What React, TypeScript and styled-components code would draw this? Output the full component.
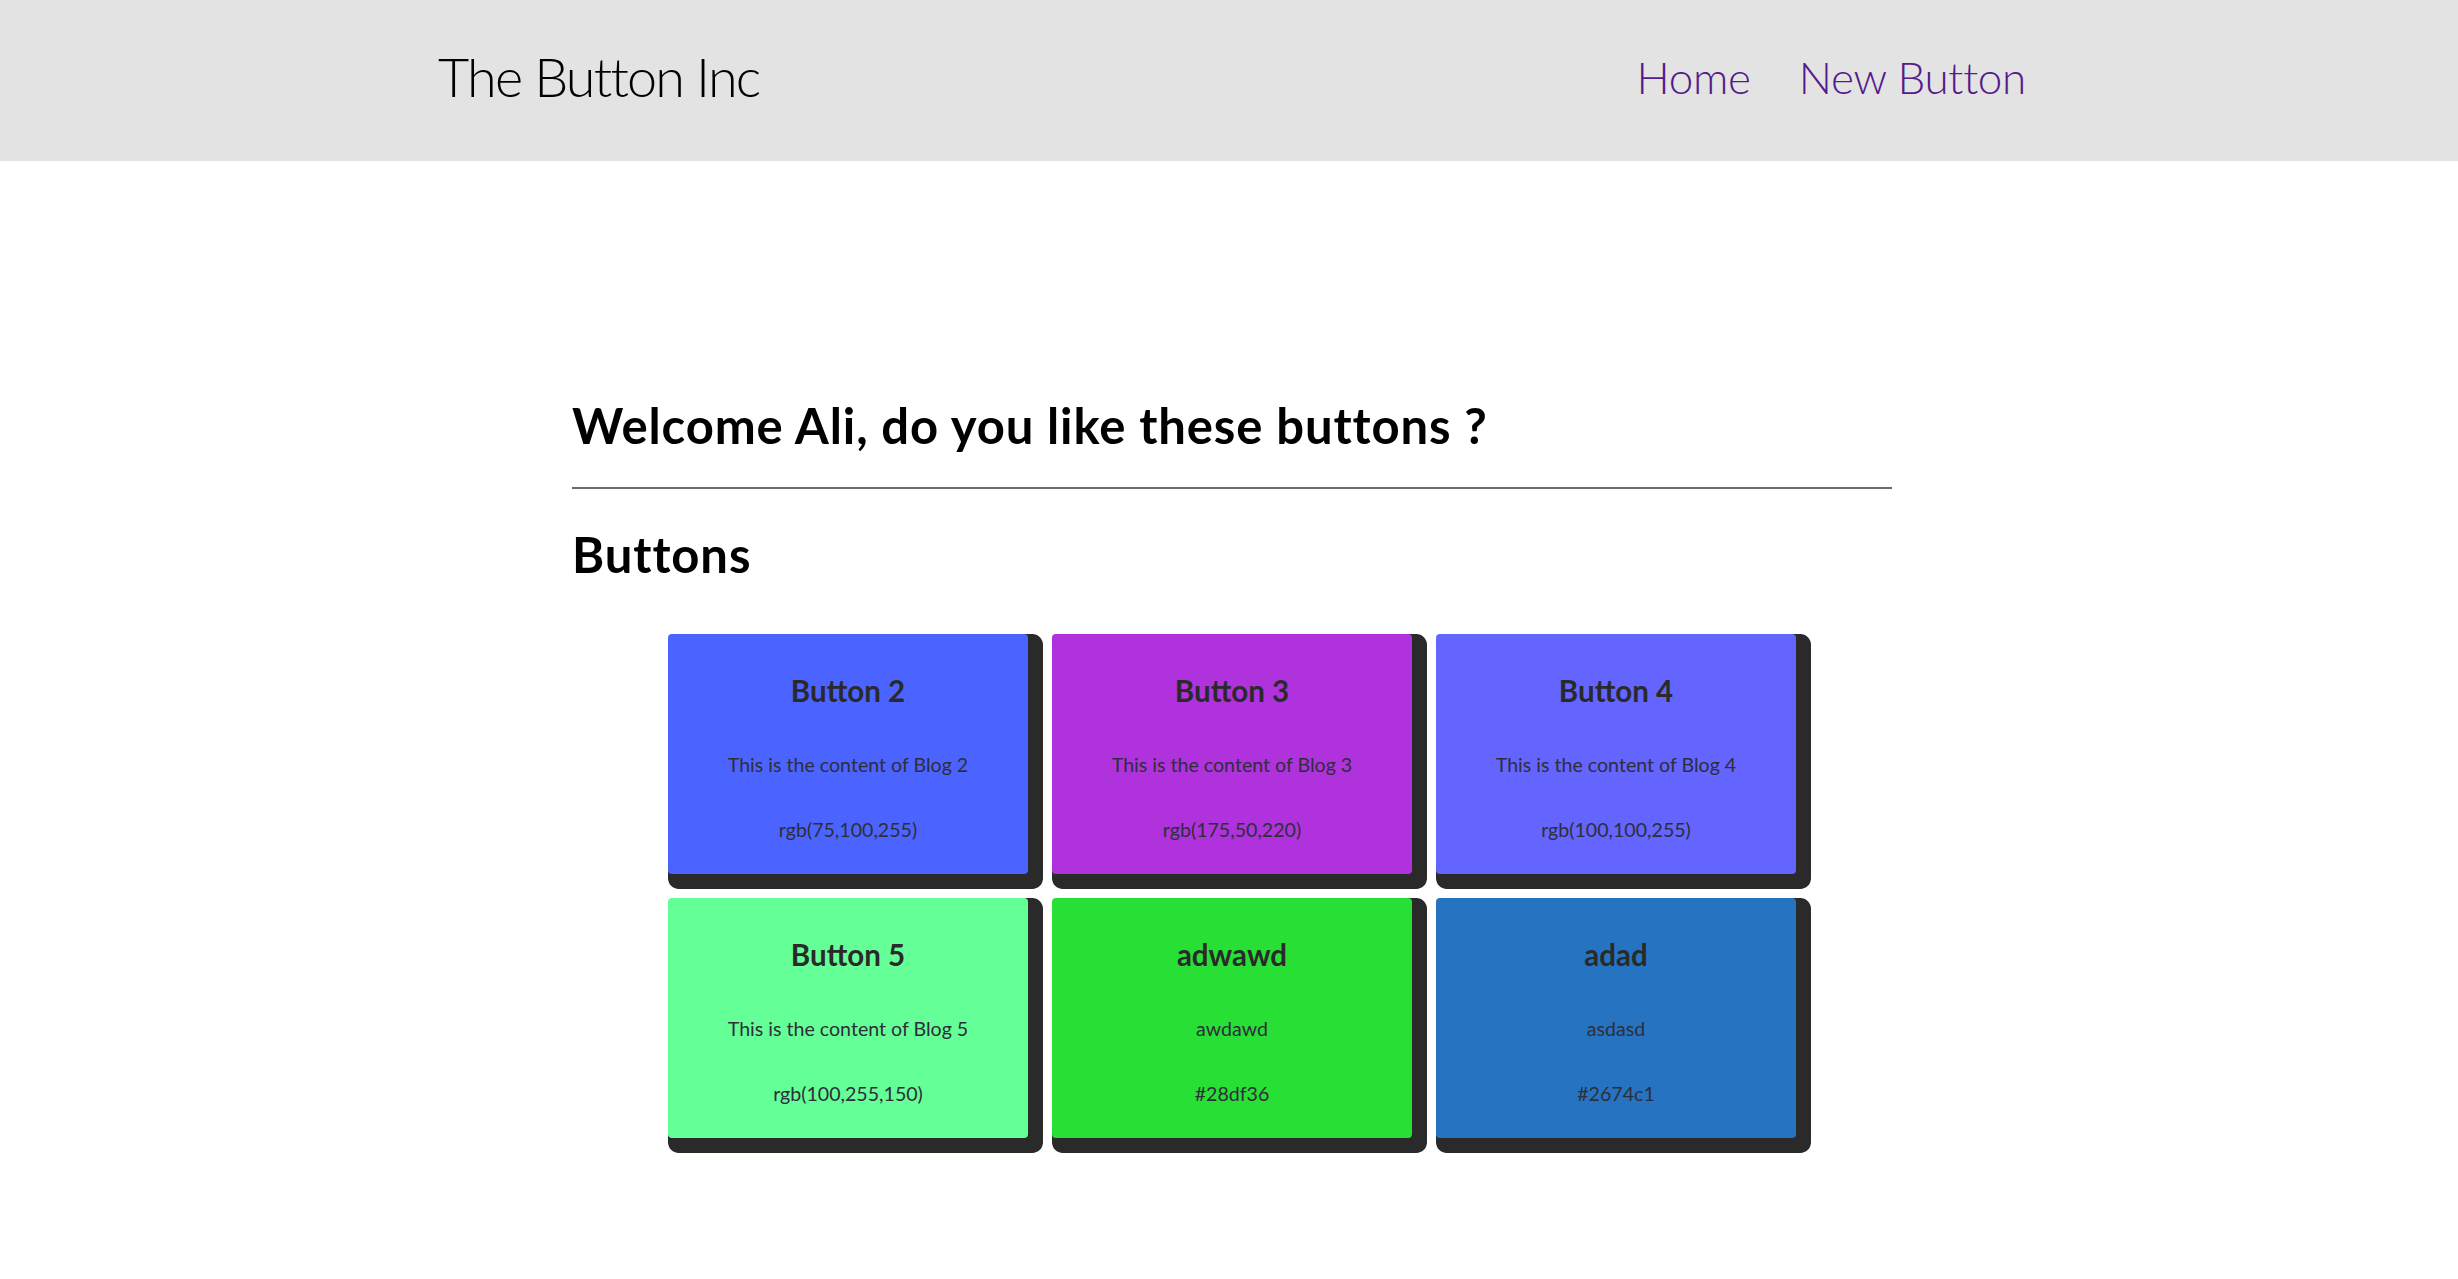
import styled, { createGlobalStyle } from "styled-components";

const GlobalStyle = createGlobalStyle`
  body {
    margin: 0;
    background-color: #ffffff;
    font-family: Lato, "Open Sans", sans-serif;
    color: #000000;
  }
`;

const Header = styled.header`
  height: 161px;
  background-color: #e3e3e3;
`;

const HeaderInner = styled.div`
  width: 1588px;
  margin: 0 auto;
  padding-left: 6px;
  display: flex;
  justify-content: space-between;
  align-items: flex-start;
`;

const Brand = styled.a`
  margin-top: 45px;
  font-size: 54px;
  line-height: 1.2;
  font-weight: 300;
  letter-spacing: -1.8px;
  color: #000000;
  text-decoration: none;
`;

const Nav = styled.nav`
  margin-top: 51px;
  display: flex;
  gap: 48px;
`;

const NavLink = styled.a`
  font-size: 44px;
  line-height: 1.2;
  font-weight: 300;
  letter-spacing: -0.3px;
  color: #551a8b;
  text-decoration: none;
`;

const Main = styled.main`
  width: 1320px;
  margin: 0 auto;
  padding: 235px 0 120px 6px;
`;

const Title = styled.h1`
  margin: 0;
  font-size: 49px;
  line-height: 1.2;
  font-weight: 700;
  letter-spacing: 0.9px;
`;

const Rule = styled.hr`
  margin: 32px 0 0;
  border: 0;
  border-top: 2px solid #6b6b6b;
`;

const Subtitle = styled.h2`
  margin: 36px 0 0;
  font-size: 49px;
  line-height: 1.2;
  font-weight: 700;
  letter-spacing: 0.9px;
`;

const Grid = styled.div`
  margin-top: 50px;
  display: grid;
  grid-template-columns: repeat(3, 360px);
  grid-auto-rows: 240px;
  gap: 24px;
  justify-content: center;
`;

const Card = styled.div<{ $bg: string }>`
  background-color: ${(p) => p.$bg};
  border-radius: 4px;
  box-shadow: 7.5px 7.5px 0 7.5px #2a2a2a;
  display: flex;
  flex-direction: column;
  align-items: center;
  text-align: center;
  color: #2a2a2a;
`;

const CardTitle = styled.h3`
  margin: 39px 0 0;
  font-size: 29.5px;
  line-height: 1.2;
  font-weight: 700;
`;

const CardText = styled.p<{ $gap: number }>`
  margin: ${(p) => p.$gap}px 0 0;
  font-size: 19.6px;
  line-height: 1.2;
  color: #2e2e3a;
`;

const buttons = [
  { title: "Button 2", content: "This is the content of Blog 2", color: "rgb(75,100,255)" },
  { title: "Button 3", content: "This is the content of Blog 3", color: "rgb(175,50,220)" },
  { title: "Button 4", content: "This is the content of Blog 4", color: "rgb(100,100,255)" },
  { title: "Button 5", content: "This is the content of Blog 5", color: "rgb(100,255,150)" },
  { title: "adwawd", content: "awdawd", color: "#28df36" },
  { title: "adad", content: "asdasd", color: "#2674c1" },
];

export default function App() {
  return (
    <>
      <GlobalStyle />
      <Header>
        <HeaderInner>
          <Brand href="/">The Button Inc</Brand>
          <Nav>
            <NavLink href="/">Home</NavLink>
            <NavLink href="/create">New Button</NavLink>
          </Nav>
        </HeaderInner>
      </Header>
      <Main>
        <Title>Welcome Ali, do you like these buttons ?</Title>
        <Rule />
        <Subtitle>Buttons</Subtitle>
        <Grid>
          {buttons.map((b) => (
            <Card key={b.title} $bg={b.color}>
              <CardTitle>{b.title}</CardTitle>
              <CardText $gap={45.5}>{b.content}</CardText>
              <CardText $gap={41}>{b.color}</CardText>
            </Card>
          ))}
        </Grid>
      </Main>
    </>
  );
}
